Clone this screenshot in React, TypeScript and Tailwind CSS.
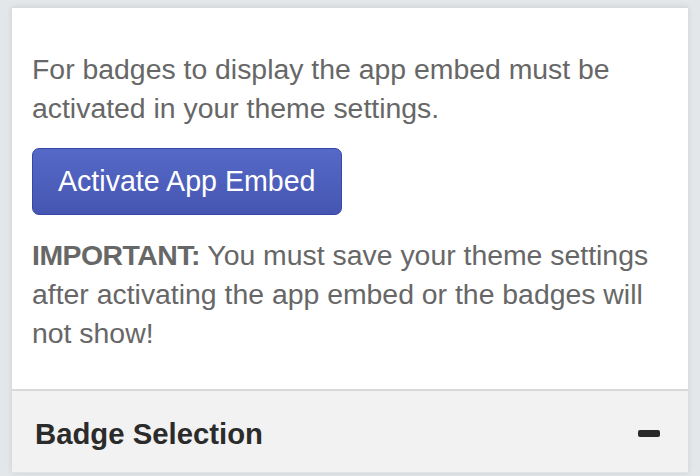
export default function App() {
  return (
    <div className="h-[476px] w-[700px] overflow-hidden bg-[#e4e7ea] px-3 pt-[7px] font-['Liberation_Sans',Arial,sans-serif]">
      <div className="flex flex-col border-t border-[#d9d9d9] bg-white shadow-[0_0_6px_rgba(0,0,0,0.1)]">
        <div className="flex flex-col items-start px-5 pb-[36px] pt-[42px] text-[28.4px] leading-[39px] text-[#676767]">
          <p>For badges to display the app embed must be activated in your theme settings.</p>
          <button className="mt-[20px] h-[67px] rounded-[7px] border border-[#3747a6] bg-gradient-to-b from-[#5669c6] to-[#4556b2] px-[25px] text-[28.6px] text-white">
            Activate App Embed
          </button>
          <p className="mt-[21px]">
            <span className="font-bold tracking-[-0.5px]">IMPORTANT:</span> You must save your theme settings after activating the app embed or the badges will not show!
          </p>
        </div>
        <div className="flex h-[84px] items-center justify-between border-y-2 border-b-[1px] border-t-[#d9d9d9] border-b-[#e4e4e4] bg-[#f2f2f2] pl-[23px] pr-[28px] pt-[4px]">
          <span className="text-[29.3px] font-semibold text-[#2b2b2b]">Badge Selection</span>
          <span className="h-[7px] w-[22px] rounded-[2px] bg-[#2a2a2a]" />
        </div>
      </div>
    </div>
  );
}
